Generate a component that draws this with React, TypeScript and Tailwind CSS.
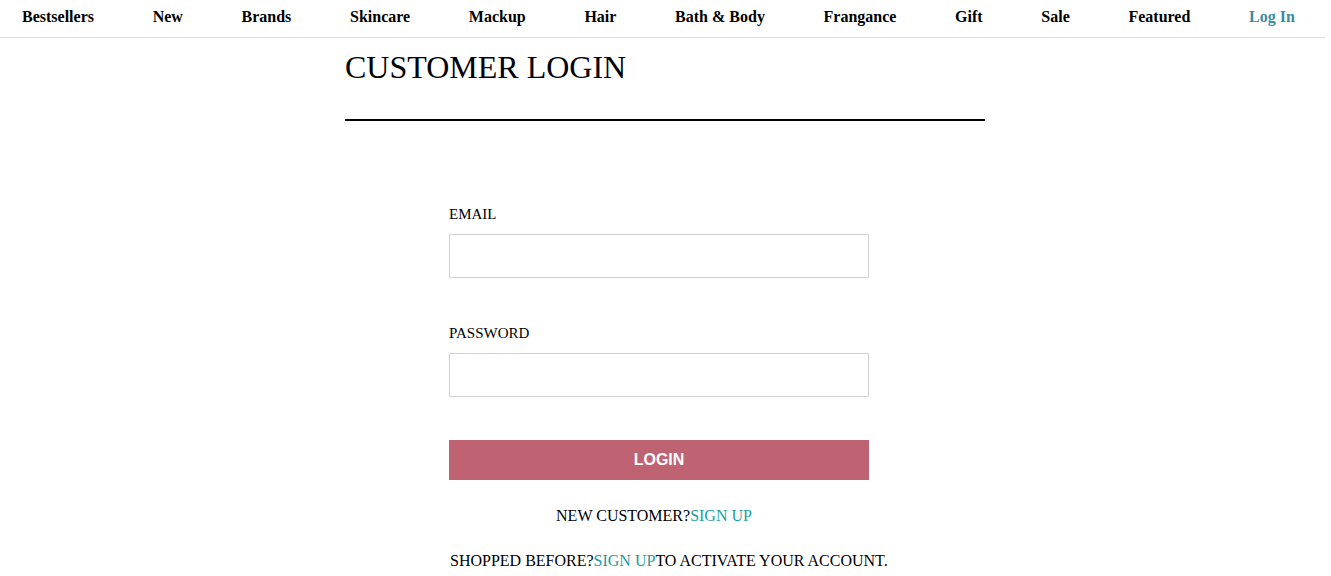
import React from "react";

const navItems = [
  "Bestsellers",
  "New",
  "Brands",
  "Skincare",
  "Mackup",
  "Hair",
  "Bath & Body",
  "Frangance",
  "Gift",
  "Sale",
  "Featured",
];

export default function App() {
  return (
    <div className="min-h-screen bg-white text-black" style={{ fontFamily: '"Liberation Serif", "Times New Roman", serif' }}>
      <nav className="flex h-[38px] w-[1325px] items-start justify-between border-b border-[#dcdcdc] pl-[22px] pr-[30px] pt-[8px]">
        {navItems.map((item) => (
          <a key={item} className="shrink-0 whitespace-nowrap text-[16px] font-bold leading-[18px] text-black">
            {item}
          </a>
        ))}
        <a className="shrink-0 whitespace-nowrap text-[16px] font-bold leading-[18px] text-[#3a8ca2]">Log In</a>
      </nav>

      <main className="mx-auto w-[641px] pr-[1px]">
        <h1 className="mt-[11px] text-[32px] font-normal leading-[36px]">CUSTOMER LOGIN</h1>
        <div className="mt-[34px] h-[2px] bg-black" />

        <form className="ml-[104px] mt-[84px] w-[420px]">
          <label className="block text-[15px] leading-[18px]">EMAIL</label>
          <input type="email" className="mt-[11px] block h-[44px] w-[420px] border border-[#d3d3d3] outline-none" />

          <label className="mt-[46px] block text-[15px] leading-[18px]">PASSWORD</label>
          <input type="password" className="mt-[11px] block h-[44px] w-[420px] border border-[#d3d3d3] outline-none" />

          <button
            type="button"
            className="mt-[43px] block h-[40px] w-[420px] bg-[#bf6372] text-[16px] font-bold text-white"
            style={{ fontFamily: '"Liberation Sans", Arial, sans-serif' }}
          >
            LOGIN
          </button>

          <p className="mt-[26px] pr-[10px] text-center text-[16px] leading-[20px]">
            NEW CUSTOMER?<a className="text-[#1a9e9e]">SIGN UP</a>
          </p>
          <p className="mt-[25px] whitespace-nowrap pl-[1px] text-[16px] leading-[20px]">
            SHOPPED BEFORE?<a className="text-[#1a9e9e]">SIGN UP</a>TO ACTIVATE YOUR ACCOUNT.
          </p>
        </form>
      </main>
    </div>
  );
}
